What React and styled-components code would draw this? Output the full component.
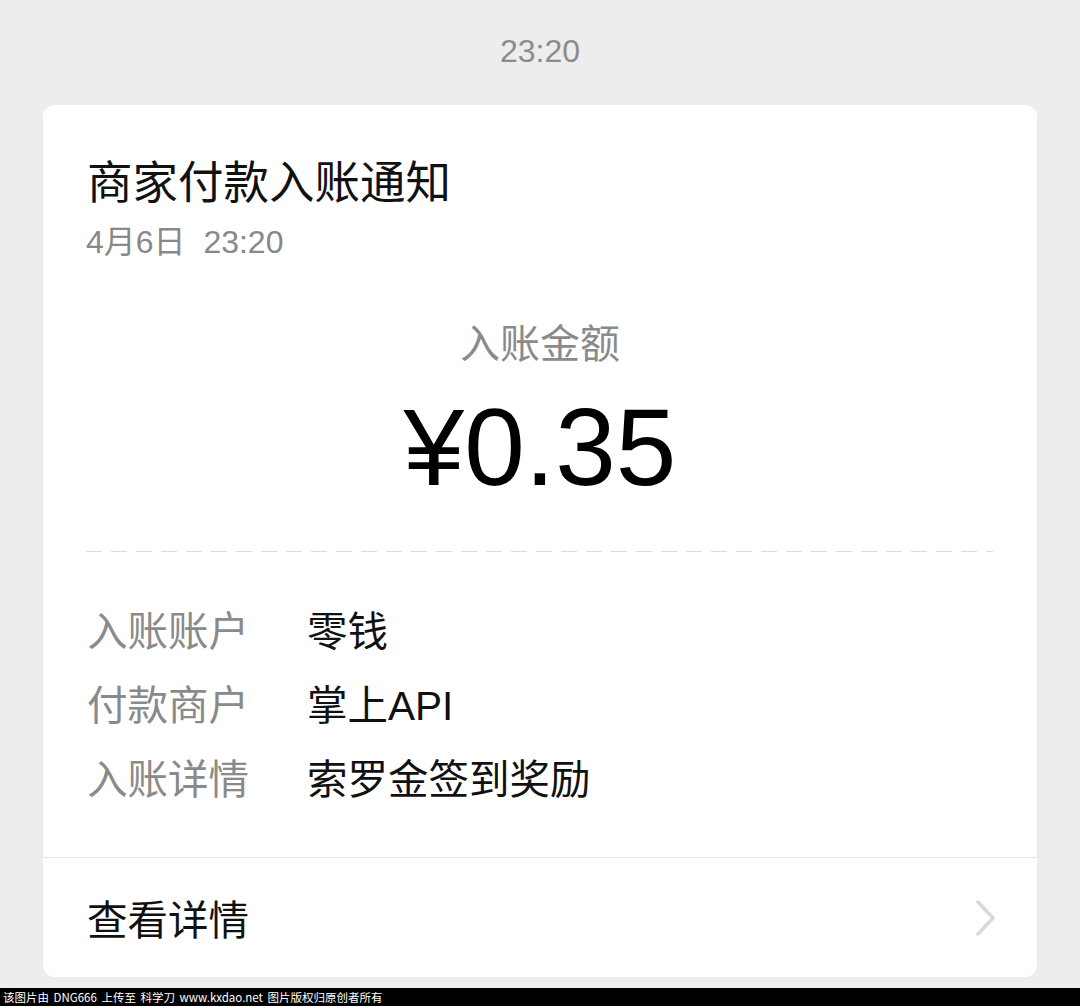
import styled, { createGlobalStyle } from 'styled-components';

const GlobalStyle = createGlobalStyle`
  html, body {
    margin: 0;
    padding: 0;
    background: #ededed;
  }
  body {
    font-family: "Liberation Sans", "Noto Sans CJK SC", sans-serif;
  }
`;

const Page = styled.div`
  display: flex;
  flex-direction: column;
  width: 1080px;
  height: 1006px;
  background: #ededed;
`;

const TimeStamp = styled.div`
  height: 105px;
  display: flex;
  align-items: center;
  justify-content: center;
  color: #8c8c8c;
  font-size: 32px;
  padding-bottom: 2px;
  box-sizing: border-box;
`;

const Card = styled.div`
  margin: 0 43px;
  background: #fff;
  border-radius: 12px;
  display: flex;
  flex-direction: column;
  overflow: hidden;
`;

const Body = styled.div`
  display: flex;
  flex-direction: column;
  padding: 51px 44px 44px 44px;
`;

const Title = styled.div`
  font-size: 45.5px;
  line-height: 56px;
  color: #111;
`;

const DateLine = styled.div`
  margin-top: 10px;
  font-size: 32px;
  line-height: 40px;
  color: #888;
  white-space: pre;
  margin-left: -1px;
`;

const AmountLabel = styled.div`
  margin-top: 57px;
  text-align: center;
  font-size: 40px;
  line-height: 50px;
  color: #8a8a8a;
`;

const Amount = styled.div`
  margin-top: 18px;
  text-align: center;
  font-size: 109px;
  line-height: 120px;
  color: #000;
`;

const Dashed = styled.div`
  margin: 44px 0 39px -1px;
  height: 1px;
  background: repeating-linear-gradient(
    to right,
    #dcdcdc 0,
    #dcdcdc 16px,
    transparent 16px,
    transparent 25px
  );
`;

const Row = styled.div`
  display: grid;
  grid-template-columns: 220px 1fr;
  height: 74px;
  align-items: center;
  font-size: 40.5px;
`;

const Label = styled.span`
  color: #8a8a8a;
`;

const Value = styled.span`
  color: #111;
`;

const Footer = styled.div`
  border-top: 1px solid #e6e6e6;
  height: 120px;
  display: flex;
  align-items: center;
  justify-content: space-between;
  padding: 0 41px 0 44px;
  box-sizing: border-box;
  font-size: 40.5px;
  color: #111;
`;

const Chevron = () => (
  <svg width="20" height="36" viewBox="0 0 20 36" fill="none">
    <path d="M2 2 L17 18 L2 34" stroke="#d9d9d9" strokeWidth="3.5" strokeLinecap="round" strokeLinejoin="round" />
  </svg>
);

const Spacer = styled.div`
  flex: 1;
`;

const Watermark = styled.div`
  height: 18px;
  background: #000;
  color: #fff;
  font-size: 11.5px;
  line-height: 18px;
  padding-left: 3px;
  font-family: "Noto Sans CJK SC", sans-serif;
  white-space: pre;
  word-spacing: 2px;
`;

const details = [
  ['入账账户', '零钱'],
  ['付款商户', '掌上API'],
  ['入账详情', '索罗金签到奖励'],
];

export default function App() {
  return (
    <Page>
      <GlobalStyle />
      <TimeStamp>23:20</TimeStamp>
      <Card>
        <Body>
          <Title>商家付款入账通知</Title>
          <DateLine>4月6日  23:20</DateLine>
          <AmountLabel>入账金额</AmountLabel>
          <Amount>¥0.35</Amount>
          <Dashed />
          {details.map(([k, v]) => (
            <Row key={k}>
              <Label>{k}</Label>
              <Value>{v}</Value>
            </Row>
          ))}
        </Body>
        <Footer>
          <span>查看详情</span>
          <Chevron />
        </Footer>
      </Card>
      <Spacer />
      <Watermark>该图片由 DNG666 上传至 科学刀 www.kxdao.net 图片版权归原创者所有</Watermark>
    </Page>
  );
}
